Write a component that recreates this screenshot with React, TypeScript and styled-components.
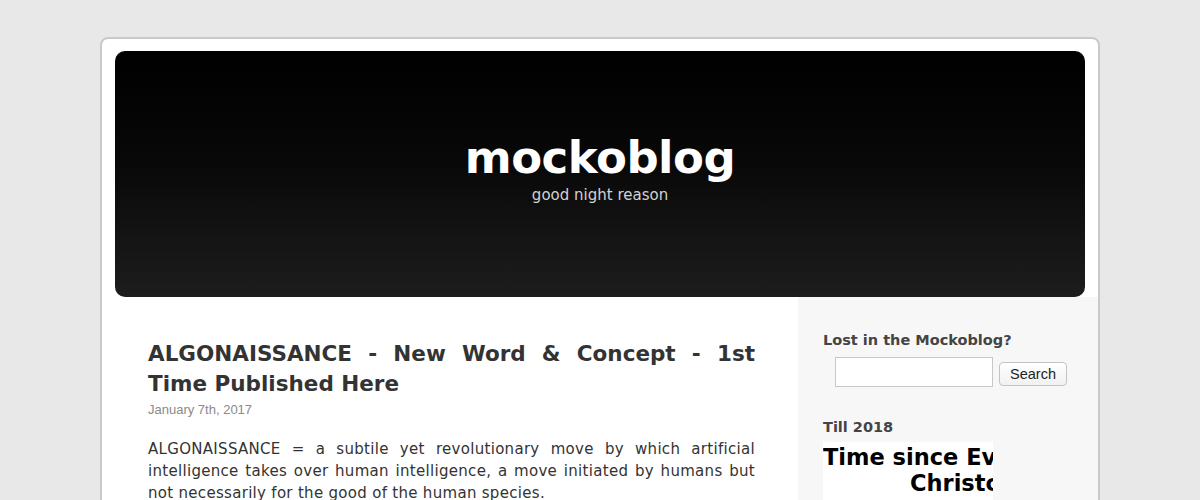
import React from "react";
import styled, { createGlobalStyle } from "styled-components";

const Global = createGlobalStyle`
  html, body { margin: 0; padding: 0; background: #e8e8e8; }
  body { font-family: "DejaVu Sans", "Liberation Sans", sans-serif; overflow: hidden; }
`;

const Page = styled.div`
  width: 1000px;
  margin: 37px auto 0;
  box-sizing: border-box;
  background: #fff;
  border: 2px solid #c9c9c9;
  border-radius: 8px;
  padding-top: 12px;
  height: 600px;
  display: flex;
  flex-direction: column;
`;

const Header = styled.header`
  margin: 0 13px;
  height: 246px;
  border-radius: 10px;
  background: linear-gradient(to bottom, #000 0%, #080808 45%, #1d1d1d 100%);
  display: flex;
  flex-direction: column;
  align-items: center;
  justify-content: center;
  color: #fff;
  padding-bottom: 14px;
  box-sizing: border-box;
`;

const Title = styled.h1`
  margin: 0;
  font-size: 45px;
  font-weight: bold;
  letter-spacing: -0.5px;
  line-height: 54px;
`;

const Tagline = styled.div`
  font-size: 15px;
  color: #d2d2d2;
  margin-top: 1px;
`;

const Body = styled.div`
  display: flex;
  flex: 1;
`;

const Main = styled.main`
  width: 696px;
  box-sizing: border-box;
  padding: 42px 43px 0 46px;
`;

const PostTitle = styled.h2`
  margin: 0;
  font-size: 21.5px;
  font-weight: bold;
  line-height: 30px;
  color: #333;
  text-align: justify;
`;

const PostDate = styled.div`
  font-family: "Liberation Sans", Arial, sans-serif;
  font-size: 13px;
  color: #8a8a8a;
  margin-top: 3px;
`;

const PostText = styled.p`
  margin: 21px 0 0;
  font-size: 15px;
  letter-spacing: 0.3px;
  line-height: 22px;
  color: #333;
  text-align: justify;
`;

const Sidebar = styled.aside`
  width: 300px;
  background: #f7f7f7;
  box-sizing: border-box;
  padding: 33px 0 0 25px;
`;

const WidgetTitle = styled.h3`
  margin: 0;
  font-size: 14.5px;
  font-weight: bold;
  color: #444;
  line-height: 20px;
`;

const SearchRow = styled.form`
  display: flex;
  align-items: center;
  gap: 6px;
  margin: 7px 0 0 12px;
`;

const SearchInput = styled.input`
  width: 158px;
  height: 30px;
  box-sizing: border-box;
  border: 1px solid #c8c8c8;
  background: #fff;
  padding: 0 4px;
`;

const SearchButton = styled.button`
  height: 24px;
  width: 68px;
  margin-top: 4px;
  box-sizing: border-box;
  border: 1px solid #c4c4c4;
  border-radius: 4px;
  background: linear-gradient(#fff, #f1f1f1);
  font-family: "Liberation Sans", Arial, sans-serif;
  font-size: 14.5px;
  color: #222;
  padding: 0;
`;

const Widget = styled.section<{ gap: number }>`
  margin-top: ${(p) => p.gap}px;
`;

const Clock = styled.div`
  margin-top: 5px;
  width: 170px;
  height: 60px;
  padding-top: 2px;
  box-sizing: border-box;
  background: #fff;
  overflow: hidden;
  white-space: nowrap;
  font-weight: bold;
  font-size: 22.5px;
  line-height: 26px;
  color: #000;
`;

const ClockLine = styled.div<{ indent: number }>`
  padding-left: ${(p) => p.indent}px;
`;

export default function App() {
  return (
    <>
      <Global />
      <Page>
        <Header>
          <Title>mockoblog</Title>
          <Tagline>good night reason</Tagline>
        </Header>
        <Body>
          <Main>
            <PostTitle>ALGONAISSANCE - New Word &amp; Concept - 1st Time Published Here</PostTitle>
            <PostDate>January 7th, 2017</PostDate>
            <PostText>
              ALGONAISSANCE = a subtile yet revolutionary move by which artificial intelligence takes over
              human intelligence, a move initiated by humans but not necessarily for the good of the human
              species.
            </PostText>
          </Main>
          <Sidebar>
            <Widget gap={0}>
              <WidgetTitle>Lost in the Mockoblog?</WidgetTitle>
              <SearchRow onSubmit={(e) => e.preventDefault()}>
                <SearchInput type="text" />
                <SearchButton type="submit">Search</SearchButton>
              </SearchRow>
            </Widget>
            <Widget gap={30}>
              <WidgetTitle>Till 2018</WidgetTitle>
              <Clock>
                <ClockLine indent={0}>Time since Eve</ClockLine>
                <ClockLine indent={87}>Christchurch</ClockLine>
              </Clock>
            </Widget>
          </Sidebar>
        </Body>
      </Page>
    </>
  );
}
